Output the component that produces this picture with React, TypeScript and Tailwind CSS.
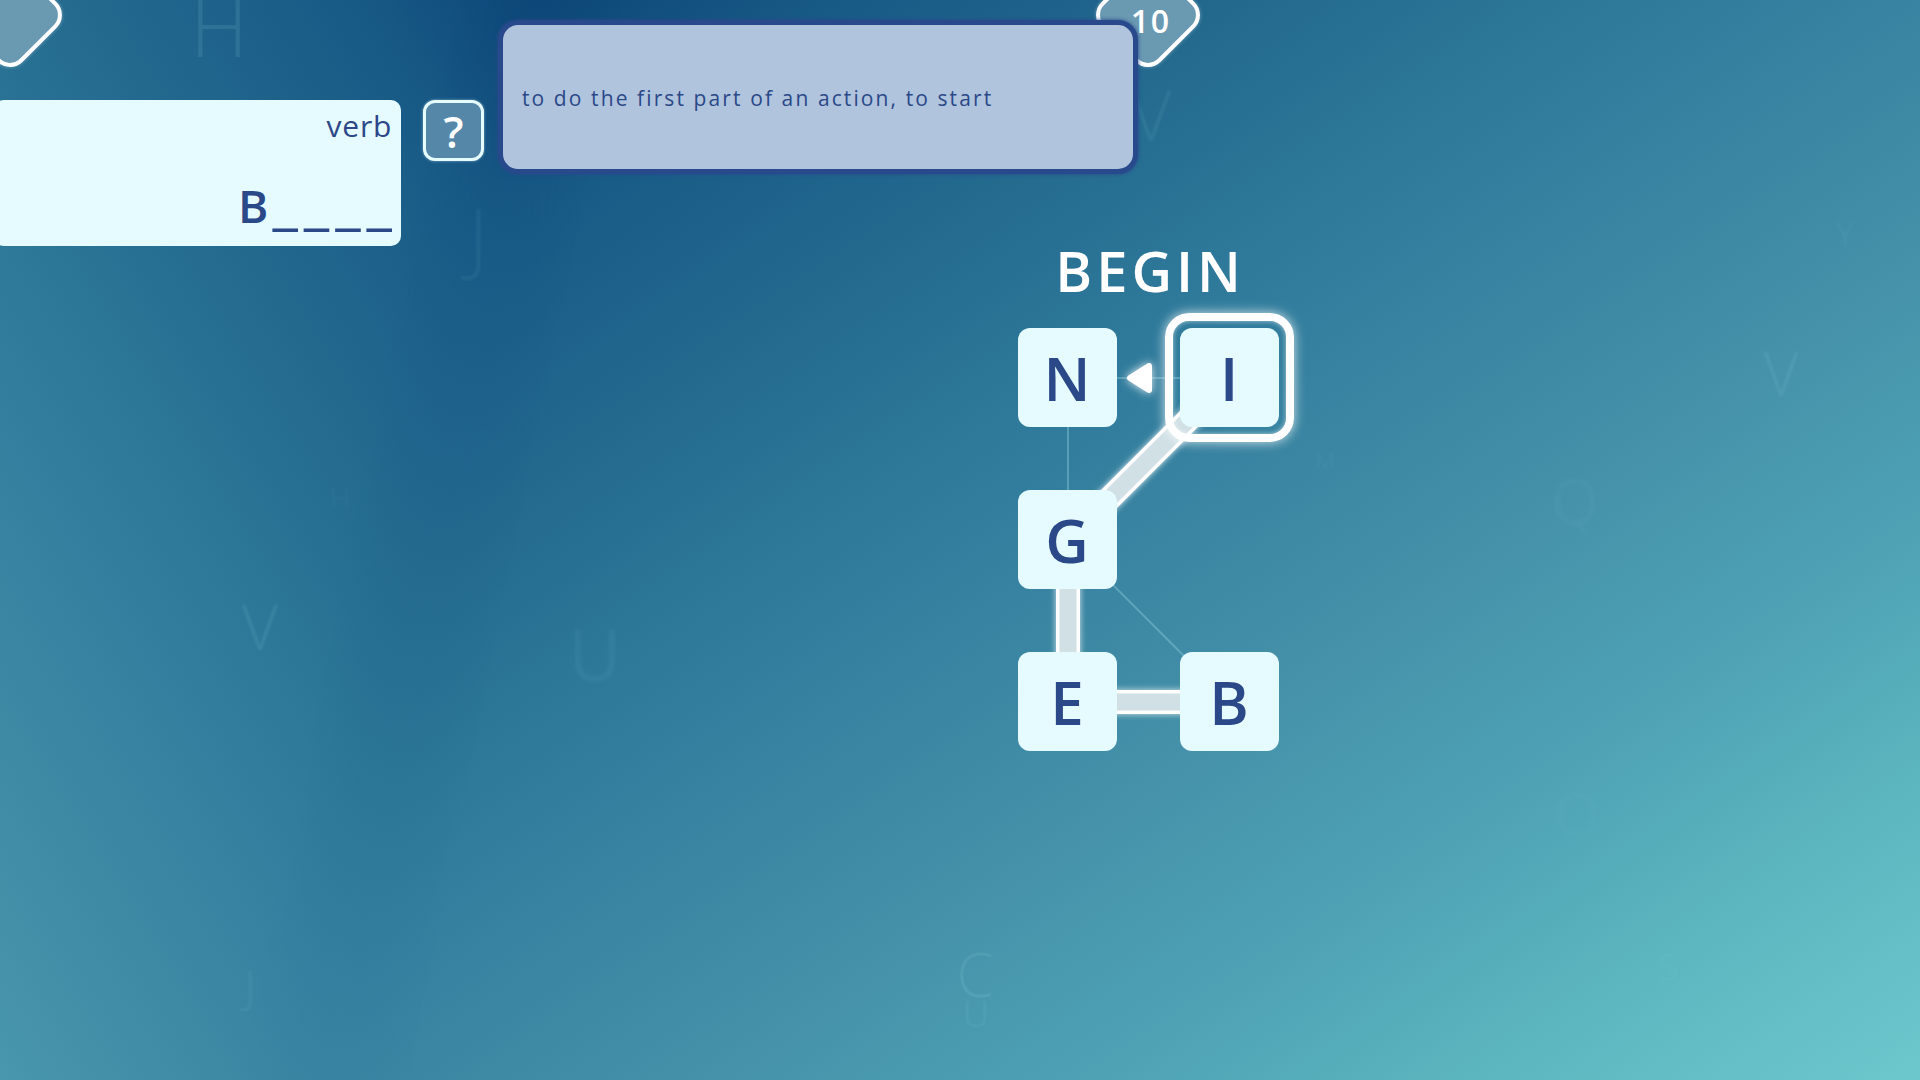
import React from "react";

const NAVY = "text-[#2b4888]";

const stops: [number, string][] = [
  [0, "#0d4778"],
  [0.1, "#185a86"],
  [0.25, "#246b8f"],
  [0.38, "#307b9c"],
  [0.57, "#438fa8"],
  [0.73, "#4fa3b5"],
  [0.85, "#5cb6bf"],
  [1, "#6cc8cd"],
];

const drifting = [
  { c: "H", x: 219, y: 57, size: 80, o: 0.13, b: 0 },
  { c: "J", x: 478, y: 266, size: 80, o: 0.07, b: 1 },
  { c: "V", x: 1151, y: 141, size: 70, o: 0.09, b: 1 },
  { c: "V", x: 260, y: 650, size: 62, o: 0.13, b: 1 },
  { c: "U", x: 595, y: 680, size: 70, o: 0.11, b: 2 },
  { c: "C", x: 975, y: 997, size: 60, o: 0.12, b: 0 },
  { c: "U", x: 976, y: 1027, size: 36, o: 0.12, b: 1 },
  { c: "V", x: 1781, y: 396, size: 60, o: 0.12, b: 1 },
  { c: "Q", x: 1575, y: 524, size: 60, o: 0.07, b: 2 },
  { c: "J", x: 250, y: 1003, size: 44, o: 0.1, b: 1 },
  { c: "Y", x: 1845, y: 245, size: 32, o: 0.08, b: 1 },
  { c: "M", x: 1325, y: 469, size: 22, o: 0.08, b: 1 },
  { c: "H", x: 340, y: 508, size: 28, o: 0.05, b: 1 },
  { c: "S", x: 1668, y: 980, size: 36, o: 0.08, b: 1 },
  { c: "O", x: 1577, y: 836, size: 58, o: 0.05, b: 2 },
];

function Backdrop() {
  return (
    <svg
      aria-hidden="true"
      className="absolute inset-0 h-full w-full"
      viewBox="0 0 1920 1080"
      preserveAspectRatio="none"
    >
      <defs>
        <linearGradient id="right" gradientUnits="userSpaceOnUse" x1="540" y1="0" x2="1474" y2="1384">
          {stops.map(([o, c]) => (
            <stop key={o} offset={o} stopColor={c} />
          ))}
        </linearGradient>
        <linearGradient id="left" gradientUnits="userSpaceOnUse" x1="540" y1="0" x2="-840" y2="865">
          {stops.map(([o, c]) => (
            <stop key={o} offset={o} stopColor={c} />
          ))}
        </linearGradient>
        <linearGradient id="blend" gradientUnits="userSpaceOnUse" x1="460" y1="-16" x2="620" y2="16">
          <stop offset="0" stopColor="#fff" />
          <stop offset="1" stopColor="#000" />
        </linearGradient>
        <mask id="fold" maskUnits="userSpaceOnUse" x="0" y="0" width="1920" height="1080">
          <rect width="1920" height="1080" fill="url(#blend)" />
        </mask>
        <filter id="b1" x="-50%" y="-50%" width="200%" height="200%">
          <feGaussianBlur stdDeviation="1" />
        </filter>
        <filter id="b2" x="-50%" y="-50%" width="200%" height="200%">
          <feGaussianBlur stdDeviation="2" />
        </filter>
      </defs>
      <rect width="1920" height="1080" fill="url(#right)" />
      <rect width="1920" height="1080" fill="url(#left)" mask="url(#fold)" />
      {drifting.map((d) => (
        <text
          key={`${d.c}${d.x}`}
          x={d.x}
          y={d.y}
          fontSize={d.size}
          fontWeight={300}
          textAnchor="middle"
          fill="#9be0ea"
          opacity={d.o}
          filter={d.b === 2 ? "url(#b2)" : d.b === 1 ? "url(#b1)" : undefined}
        >
          {d.c}
        </text>
      ))}
    </svg>
  );
}

function Badge({ value, className }: { value?: string; className: string }) {
  return (
    <div
      className={`flex size-21 shrink-0 rotate-45 items-center justify-center rounded-[18px] border-4 border-white bg-[#6a9ab2] shadow-[0_0_4px_rgba(255,255,255,0.4)] ${className}`}
    >
      {value && (
        <span className="mt-1 ml-3 -rotate-45 text-[32px] leading-none font-semibold tracking-wider text-white">
          {value}
        </span>
      )}
    </div>
  );
}

function Tile({ letter, selected, className = "" }: { letter: string; selected?: boolean; className?: string }) {
  return (
    <button
      type="button"
      className={`relative flex size-[99px] items-center justify-center rounded-xl bg-[#e6fbff] text-[60px] leading-none font-semibold ${NAVY} ${className}`}
    >
      {letter}
      {selected && (
        <span className="absolute -inset-[15px] rounded-3xl border-8 border-white shadow-[0_0_12px_rgba(255,255,255,0.8),inset_0_0_5px_rgba(255,255,255,0.6)]" />
      )}
    </button>
  );
}

function Links() {
  const thick = ["M212 50 L50 212", "M50 212 V374", "M50 374 H212"];
  return (
    <svg aria-hidden="true" className="absolute inset-0 overflow-visible" width="261" height="423" viewBox="0 0 261 423" fill="none">
      <path d="M50 50 H212 M50 50 V212 M50 212 L212 374" stroke="#8fd0dc" strokeOpacity="0.4" strokeWidth="2" />
      <g className="drop-shadow-[0_0_3px_rgba(255,255,255,0.8)]">
        {thick.map((d) => (
          <path key={d} d={d} stroke="#fff" strokeWidth="24" />
        ))}
      </g>
      {thick.map((d) => (
        <path key={d} d={d} stroke="#d0e0e5" strokeWidth="17" />
      ))}
      <path
        className="drop-shadow-[0_0_5px_rgba(255,255,255,0.9)]"
        d="M112 50 L131 38 V62 Z"
        fill="#fff"
        stroke="#fff"
        strokeWidth="6"
        strokeLinejoin="round"
      />
    </svg>
  );
}

export default function App() {
  return (
    <div className="relative min-h-screen overflow-hidden bg-[#307b9c] font-['Open_Sans','Noto_Sans',sans-serif]">
      <Backdrop />
      <div className="relative">
        <header className="-mt-[27px] flex">
          <Badge className="-ml-8" />
          <Badge className="mr-[38%] ml-auto" value="10" />
        </header>

        <section className="mt-[43px] flex items-start gap-[22px]">
          <div className={`-ml-[6px] flex h-[146px] w-[407px] flex-col items-end justify-between rounded-[10px] bg-[#e6fbff] pr-[9px] ${NAVY}`}>
            <span className="mt-[6px] text-[30px] leading-10 tracking-wide">verb</span>
            <span className="mb-4 flex items-baseline gap-1 leading-none">
              <span className="text-[46px] leading-none font-semibold">B</span>
              <span className="-mr-[6px] text-[58px] leading-none tracking-[6px]">____</span>
            </span>
          </div>
          <div className="relative">
            <button
              type="button"
              aria-label="Show hint"
              aria-describedby="hint"
              className="flex size-[61px] items-center justify-center rounded-xl border-[3px] border-[#e6fbff] bg-[#5487a8] text-[44px] leading-none font-semibold text-white shadow-[0_0_3px_rgba(230,251,255,0.5)]"
            >
              ?
            </button>
            <div
              id="hint"
              role="tooltip"
              className={`absolute -top-20 left-[75px] z-10 flex h-[154px] w-[640px] items-center rounded-[20px] border-5 border-[#284a8c] bg-[#b0c4dd] px-[19px] pt-1 text-[21px] tracking-widest shadow-[0_0_4px_#284a8c] ${NAVY}`}
            >
              to do the first part of an action, to start
            </div>
          </div>
        </section>

        <main className="ml-[53%] flex w-[261px] flex-col items-center">
          <h1 className="-mr-1 pb-[34px] text-[56px] leading-[48px] font-semibold tracking-[4px] text-white">BEGIN</h1>
          <div className="relative">
            <Links />
            <div className="grid grid-cols-2 gap-[63px]">
              <Tile letter="N" />
              <Tile letter="I" selected />
              <Tile letter="G" />
              <Tile letter="E" className="col-start-1" />
              <Tile letter="B" />
            </div>
          </div>
        </main>
      </div>
    </div>
  );
}
